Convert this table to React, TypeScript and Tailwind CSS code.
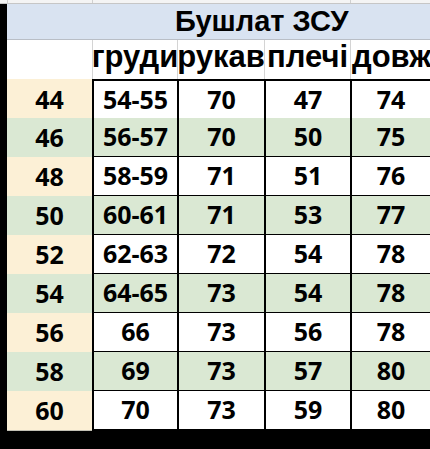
import React from 'react';

type Row = { size: string; chest: string; sleeve: string; shoulder: string; length: string };

const rows: Row[] = [
  { size: '44', chest: '54-55', sleeve: '70', shoulder: '47', length: '74' },
  { size: '46', chest: '56-57', sleeve: '70', shoulder: '50', length: '75' },
  { size: '48', chest: '58-59', sleeve: '71', shoulder: '51', length: '76' },
  { size: '50', chest: '60-61', sleeve: '71', shoulder: '53', length: '77' },
  { size: '52', chest: '62-63', sleeve: '72', shoulder: '54', length: '78' },
  { size: '54', chest: '64-65', sleeve: '73', shoulder: '54', length: '78' },
  { size: '56', chest: '66', sleeve: '73', shoulder: '56', length: '78' },
  { size: '58', chest: '69', sleeve: '73', shoulder: '57', length: '80' },
  { size: '60', chest: '70', sleeve: '73', shoulder: '59', length: '80' },
];

const cols = 'grid grid-cols-[85px_85px_87px_86px_1fr]';
const arial = "font-['Liberation_Sans',Arial,sans-serif]";
const calibri = "font-['Open_Sans','Lato',sans-serif]";

export default function App() {
  return (
    <div className="w-[430px] h-[449px] bg-black overflow-hidden">
      {/* sheet gridline strip above the table */}
      <div className={`${cols} h-[4px] bg-[#f4f4f4] border-b border-[#c6c6c6] pl-[7px]`}>
        <div className="border-l border-[#d0d0d0]" />
        <div className="border-l border-[#d0d0d0]" />
        <div />
        <div />
        <div className="border-l border-[#d0d0d0]" />
      </div>

      <div className="pl-[7px]">
        {/* title */}
        <div
          className={`h-[36px] bg-[#d9e3f1] border-b border-[#b9bec6] pl-[168px] flex items-center whitespace-nowrap text-[29px] leading-none font-bold text-black ${arial}`}
        >
          Бушлат ЗСУ
        </div>

        {/* headers */}
        <div className={`${cols} h-[39px] bg-white text-[31px] leading-none font-bold text-black ${arial}`}>
          <div />
          <div className="flex items-end justify-center pb-[7px] whitespace-nowrap border-l border-[#d4d4d4]">груди</div>
          <div className="flex items-end justify-center pb-[7px] whitespace-nowrap border-l border-[#d4d4d4]">рукав</div>
          <div className="flex items-end justify-center pb-[7px] whitespace-nowrap border-l border-[#d4d4d4]">плечі</div>
          <div className="flex items-end pl-[1px] pb-[7px] whitespace-nowrap border-l border-[#d4d4d4]">довж</div>
        </div>

        {/* data */}
        <div className={`${calibri} text-[25px] font-bold text-black`}>
          {rows.map((r, i) => {
            const green = i % 2 === 1;
            const first = i === 0;
            const cell = `flex items-center justify-center border-l-2 border-b-2 border-black ${
              first ? 'border-t-2' : ''
            } ${green ? 'bg-[#dae8d3]' : 'bg-white'}`;
            return (
              <div key={r.size} className={`${cols} h-[39px]`}>
                <div
                  className={`flex items-center justify-center border-b border-[#c2c0b4] ${
                    green ? 'bg-[#dae8d3]' : 'bg-[#fcf0d6]'
                  }`}
                >
                  {r.size}
                </div>
                <div className={cell}>{r.chest}</div>
                <div className={cell}>{r.sleeve}</div>
                <div className={cell}>{r.shoulder}</div>
                <div className={cell}>{r.length}</div>
              </div>
            );
          })}
        </div>
      </div>
    </div>
  );
}
